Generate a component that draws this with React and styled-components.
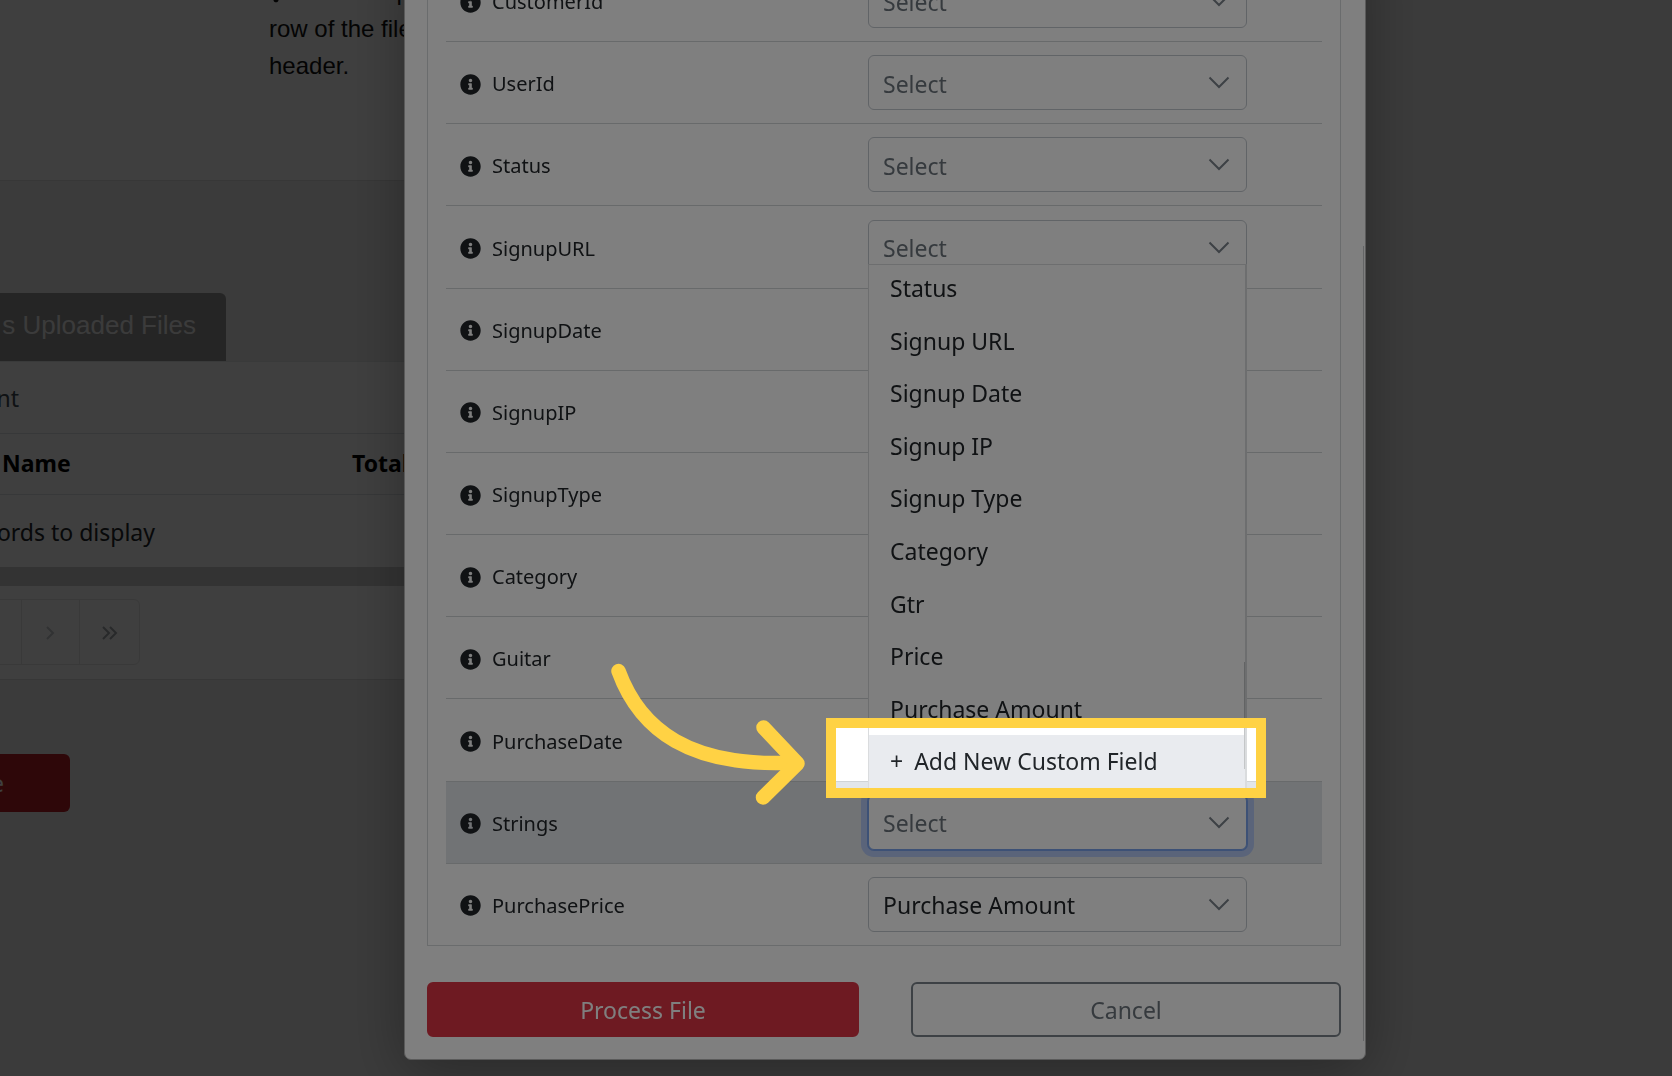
import { useState } from "react";
import styled, { createGlobalStyle } from "styled-components";
import { FaInfoCircle, FaQuestion } from "react-icons/fa";

const GlobalStyle = createGlobalStyle`
  * {
    box-sizing: border-box;
  }

  body {
    margin: 0;
    background-color: #ececec;
    color: #212529;
    font-family: 'Noto Sans', 'Open Sans', sans-serif;
    font-size: 23px;
    overflow: hidden;
  }
`;

/* ---------- page behind the modal ---------- */

const Page = styled.main`
  width: 75%;
  min-height: 100vh;
  overflow: hidden;
`;

const InfoCard = styled.section`
  height: 181px;
  padding: 0 0 0 269px;
  background-color: #fdfdfd;
  border-bottom: 1px solid #dcdcdc;
  overflow: hidden;
`;

const InfoText = styled.p`
  margin: -27px 0 0;
  font-family: 'Liberation Sans', sans-serif;
  font-size: 24px;
  line-height: 37px;
  color: #111;

  svg {
    width: 14px;
    vertical-align: -5px;
  }
`;

const Tab = styled.button`
  display: flex;
  align-items: center;
  justify-content: flex-end;
  width: 226px;
  height: 68px;
  margin-top: 112px;
  padding: 0 30px 4px 0;
  border: none;
  border-radius: 0 6px 0 0;
  background-color: #949494;
  color: #efefef;
  font-family: 'Liberation Sans', sans-serif;
  font-size: 26px;
  white-space: nowrap;
`;

const FilesCard = styled.section`
  background-color: #fdfdfd;
  border-top: 1px solid #e4e8e8;
  border-bottom: 1px solid #dcdcdc;
`;

const ClientLine = styled.div`
  display: flex;
  justify-content: flex-end;
  align-items: center;
  width: 19px;
  height: 71px;
  color: #3c4852;
`;

const FilesTable = styled.table`
  width: 100%;
  border-collapse: collapse;
  table-layout: fixed;

  th {
    height: 61px;
    padding: 0 0 2px 2px;
    border-top: 1px solid #dee2e6;
    border-bottom: 1px solid #dee2e6;
    text-align: left;
    color: #000;
  }

  th:first-child {
    width: 350px;
  }

  td {
    height: 72px;
    padding: 0;
  }
`;

const EmptyText = styled.div`
  display: flex;
  justify-content: flex-end;
  width: 155px;
  padding-top: 2px;
  white-space: nowrap;
`;

const ScrollTrack = styled.div`
  height: 19px;
  background-color: #cfcfcf;
`;

const Pager = styled.nav`
  display: flex;
  justify-content: flex-end;
  width: 140px;
  padding: 13px 0 14px;
`;

const PagerButton = styled.button`
  display: flex;
  align-items: center;
  justify-content: center;
  flex: 0 0 ${(props) => (props.$last ? "61px" : "59px")};
  height: 66px;
  margin-left: -1px;
  padding-top: 4px;
  border: 1px solid #e6e6e6;
  border-radius: ${(props) => (props.$last ? "0 6px 6px 0" : "0")};
  background-color: transparent;
  color: ${(props) => (props.$last ? "#a0a6ab" : "#c4c8cc")};
`;

const SaveButton = styled.button`
  display: flex;
  align-items: center;
  justify-content: flex-end;
  width: 70px;
  height: 58px;
  margin-top: 74px;
  padding: 0 66px 0 0;
  border: none;
  border-radius: 0 6px 6px 0;
  background-color: #b91f26;
  color: #fff;
  font-family: inherit;
  font-size: 23px;
`;

/* ---------- modal ---------- */

const Backdrop = styled.div`
  position: fixed;
  inset: 0;
  display: flex;
  align-items: flex-end;
  padding: 0 306px 16px 404px;
  background-color: rgba(0, 0, 0, 0.5);
`;

const Modal = styled.div`
  position: relative;
  flex: 1;
  padding: 23px 24px 22px 22px;
  border: 1px solid #b4b4b4;
  border-radius: 7px;
  background-color: #fff;
  box-shadow: 0 12px 60px rgba(0, 0, 0, 0.3);
`;

const ModalScroll = styled.div`
  position: absolute;
  right: 1px;
  bottom: 18px;
  width: 1px;
  height: 795px;
  background-color: #c8cacc;
`;

const FieldList = styled.div`
  display: grid;
  grid-auto-rows: 1fr;
  min-height: 988px;
  padding: 0 18px;
  border: 1px solid #d4d8da;
`;

const FieldRow = styled.div`
  display: grid;
  grid-template-columns: 408fr 379fr;
  align-items: center;
  padding: 0 75px 0 14px;
  border-top: 1px solid #d0d4d6;
  background-color: ${(props) => (props.$active ? "#e2e6ea" : "transparent")};
`;

const FieldLabel = styled.label`
  display: flex;
  align-items: center;
  gap: 11px;
  padding-top: 3px;
  font-size: 20px;
  line-height: 28px;

  svg {
    width: 21px;
    height: 21px;
  }
`;

const SelectBox = styled.div`
  position: relative;
`;

const Select = styled.select`
  display: block;
  width: 100%;
  height: 55px;
  padding: 2px 48px 0 14px;
  appearance: none;
  border: 1px solid ${(props) => (props.$focused ? "#7ba3ec" : "#c2c8ce")};
  border-radius: 6px;
  outline: none;
  background-color: #fff;
  box-shadow: ${(props) =>
    props.$focused ? "0 0 0 1px #7ba3ec, 0 0 0 7px #b4c8f4" : "none"};
  color: ${(props) => (props.$empty ? "#6c757d" : "#212529")};
  font-family: inherit;
  font-size: 23px;
`;

const Chevron = styled.svg`
  position: absolute;
  top: 21px;
  right: 17px;
  width: 22px;
  height: 13px;
  fill: none;
  stroke: #7b838b;
  stroke-width: 2;
  pointer-events: none;
`;

const Menu = styled.ul`
  position: absolute;
  left: 0;
  right: 0;
  bottom: 61px;
  display: flex;
  flex-direction: column;
  justify-content: flex-end;
  height: 525px;
  margin: 0;
  padding: 0;
  border: 1px solid #dadcde;
  border-right-width: 2px;
  background-color: #fff;
  list-style: none;
  overflow: hidden;
`;

const MenuScroll = styled.span`
  position: absolute;
  right: 0;
  bottom: 19px;
  width: 1px;
  height: 107px;
  background-color: #c4c6c8;
`;

const MenuItems = styled.div`
  display: grid;
  grid-auto-rows: 1fr;
  flex: 0 0 526px;
`;

const MenuItem = styled.li`
  display: flex;
  align-items: center;
  gap: 11px;
  padding: 0 21px;
  background-color: ${(props) => (props.$active ? "#e9ebef" : "transparent")};
`;

const Actions = styled.div`
  display: grid;
  grid-template-columns: 432fr 430fr;
  gap: 52px;
  margin-top: 36px;
`;

const ActionButton = styled.button`
  height: 55px;
  border: 2px solid ${(props) => (props.$primary ? "#dc3545" : "#7a838a")};
  border-radius: 6px;
  background-color: ${(props) => (props.$primary ? "#dc3545" : "#fff")};
  color: ${(props) => (props.$primary ? "#fff" : "#6c757d")};
  font-family: inherit;
  font-size: 23px;
`;

/* ---------- guide: dims everything but the framed option ---------- */

const Spotlight = styled.div`
  position: absolute;
  z-index: 2;
  left: -42px;
  right: -19px;
  top: -77px;
  height: 80px;
  border: 10px solid #ffd244;
  box-shadow: 0 0 0 9999px rgba(0, 0, 0, 0.5);
  pointer-events: none;
`;

const Arrow = styled.svg`
  position: absolute;
  z-index: 3;
  right: 397px;
  top: -140px;
  width: 250px;
  height: 160px;
  fill: none;
  stroke: #ffd244;
  stroke-width: 14.5;
  stroke-linecap: round;
  stroke-linejoin: round;
  pointer-events: none;
`;

const fields = [
  "CustomerId",
  "UserId",
  "Status",
  "SignupURL",
  "SignupDate",
  "SignupIP",
  "SignupType",
  "Category",
  "Guitar",
  "PurchaseDate",
  "Strings",
  "PurchasePrice",
];

const options = [
  "Status",
  "Signup URL",
  "Signup Date",
  "Signup IP",
  "Signup Type",
  "Category",
  "Gtr",
  "Price",
  "Purchase Amount",
];

const activeField = "Strings";

function FieldMenu() {
  return (
    <Menu role="listbox" aria-label="Fields">
      <MenuItems role="presentation">
        {options.map((option) => (
          <MenuItem key={option} role="option" aria-selected={false}>
            {option}
          </MenuItem>
        ))}
        <MenuItem role="option" aria-selected $active>
          <span>+ </span>
          <span>Add New Custom Field</span>
        </MenuItem>
      </MenuItems>
      <MenuScroll />
    </Menu>
  );
}

function Field({ name, value, onChange }) {
  const active = name === activeField;
  return (
    <FieldRow $active={active}>
      <FieldLabel htmlFor={name}>
        <FaInfoCircle />
        {name}
      </FieldLabel>
      <SelectBox>
        <Select
          id={name}
          value={value}
          $focused={active}
          $empty={!value}
          onChange={(e) => onChange(name, e.target.value)}
        >
          <option value="">Select</option>
          {options.map((option) => (
            <option key={option} value={option}>
              {option}
            </option>
          ))}
        </Select>
        <Chevron viewBox="0 0 22 13">
          <path d="M1.5 1.5 L11 11 L20.5 1.5" />
        </Chevron>
        {active && (
          <>
            <FieldMenu />
            <Spotlight />
            <Arrow viewBox="0 0 250 160">
              <path d="M18.5 16 C40 75 90 113 195 107.500" />
              <path d="M163.500 72.500 L197.500 108.500 L163 142.500" />
            </Arrow>
          </>
        )}
      </SelectBox>
    </FieldRow>
  );
}

function App() {
  const [mapping, setMapping] = useState({ PurchasePrice: "Purchase Amount" });

  const handleChange = (name, value) => {
    setMapping({ ...mapping, [name]: value });
  };

  return (
    <>
      <GlobalStyle />
      <Page>
        <InfoCard>
          <InfoText>
            <FaQuestion />
            Please map
            <br />
            row of the file
            <br />
            header.
          </InfoText>
        </InfoCard>
        <Tab>s Uploaded Files</Tab>
        <FilesCard>
          <ClientLine>nt</ClientLine>
          <FilesTable>
            <thead>
              <tr>
                <th>Name</th>
                <th>Total</th>
              </tr>
            </thead>
            <tbody>
              <tr>
                <td colSpan={2}>
                  <EmptyText>ords to display</EmptyText>
                </td>
              </tr>
            </tbody>
          </FilesTable>
          <ScrollTrack />
          <Pager aria-label="Pages">
            <PagerButton aria-label="Previous" />
            <PagerButton aria-label="Next">
              <svg width="10" height="14" fill="none" stroke="currentColor" strokeWidth="2">
                <path d="M1 1 L7 7 L1 13" />
              </svg>
            </PagerButton>
            <PagerButton aria-label="Last" $last>
              <svg width="18" height="14" fill="none" stroke="currentColor" strokeWidth="2">
                <path d="M2 1 L8 7 L2 13 M9 1 L15 7 L9 13" />
              </svg>
            </PagerButton>
          </Pager>
        </FilesCard>
        <SaveButton>e</SaveButton>
      </Page>
      <Backdrop>
        <Modal role="dialog" aria-modal="true">
          <FieldList>
            {fields.map((name) => (
              <Field
                key={name}
                name={name}
                value={mapping[name] || ""}
                onChange={handleChange}
              />
            ))}
          </FieldList>
          <Actions>
            <ActionButton $primary>Process File</ActionButton>
            <ActionButton>Cancel</ActionButton>
          </Actions>
          <ModalScroll />
        </Modal>
      </Backdrop>
    </>
  );
}

export default App;
